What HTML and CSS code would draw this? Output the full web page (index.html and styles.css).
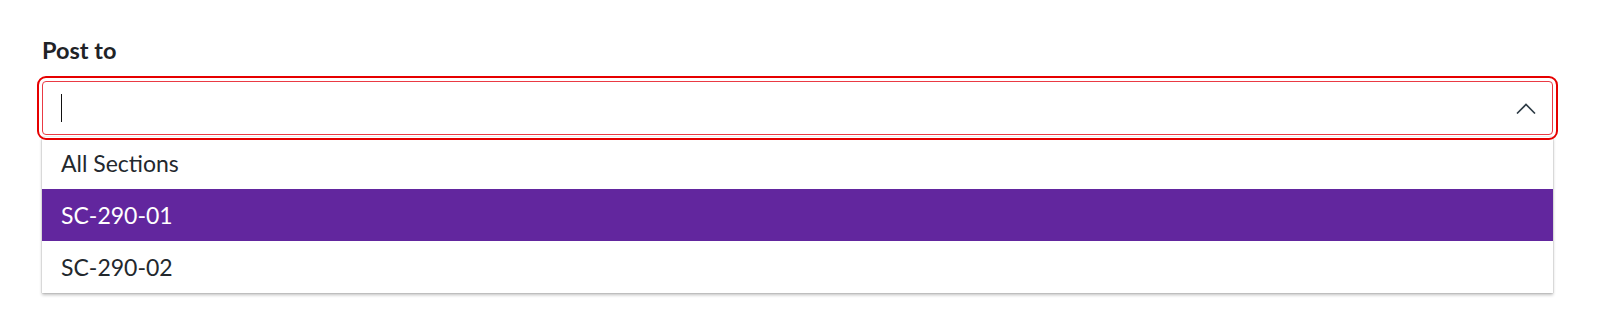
FILE: index.html
```html
<!DOCTYPE html>
<html lang="en">
<head>
<meta charset="utf-8">
<title>Post to</title>
<link rel="stylesheet" href="styles.css">
</head>
<body>
<div class="page">
  <label class="field-label" for="post-to">Post to</label>
  <div class="combo">
    <div class="combo-input" id="post-to">
      <span class="caret"></span>
      <svg class="chevron" width="20" height="11" viewBox="0 0 20 11" aria-hidden="true">
        <polyline points="1,10.5 10,1.5 19,10.5" fill="none" stroke="#2d3b45" stroke-width="1.6"/>
      </svg>
    </div>
    <ul class="options" role="listbox">
      <li class="option">All Sections</li>
      <li class="option option-active">SC-290-01</li>
      <li class="option">SC-290-02</li>
    </ul>
  </div>
</div>
</body>
</html>
```

FILE: styles.css
```css
html, body {
  margin: 0;
  padding: 0;
  background: #ffffff;
}

html {
  min-height: 330px;
}

body {
  min-height: 330px;
  font-family: Lato, "Noto Sans", sans-serif;
  color: #2d3b45;
}

.page {
  padding: 35px 47px 37px 42px;
}

.field-label {
  display: block;
  font-size: 23.5px;
  font-weight: 700;
  line-height: 30px;
  color: #1f2327;
}

.combo {
  margin-top: 16px;
}

.combo-input {
  box-sizing: border-box;
  height: 54px;
  border: 1px solid #ea3a44;
  border-radius: 4px;
  outline: 2px solid #e60000;
  outline-offset: 3px;
  display: flex;
  align-items: center;
  justify-content: space-between;
  padding: 0 16px 0 18px;
}

.caret {
  display: block;
  width: 1px;
  height: 28px;
  background: #111;
}

.chevron {
  display: block;
}

.options {
  margin: 2px 0 0;
  padding: 0;
  list-style: none;
  background: #fff;
  box-shadow: 0 2px 3px rgba(0, 0, 0, 0.25), 0 0 1px rgba(0, 0, 0, 0.35);
}

.option {
  height: 52px;
  line-height: 53px;
  padding: 0 19px;
  font-size: 23px;
  color: #23282d;
}

.option-active {
  background: #62269e;
  color: #ffffff;
}
```
